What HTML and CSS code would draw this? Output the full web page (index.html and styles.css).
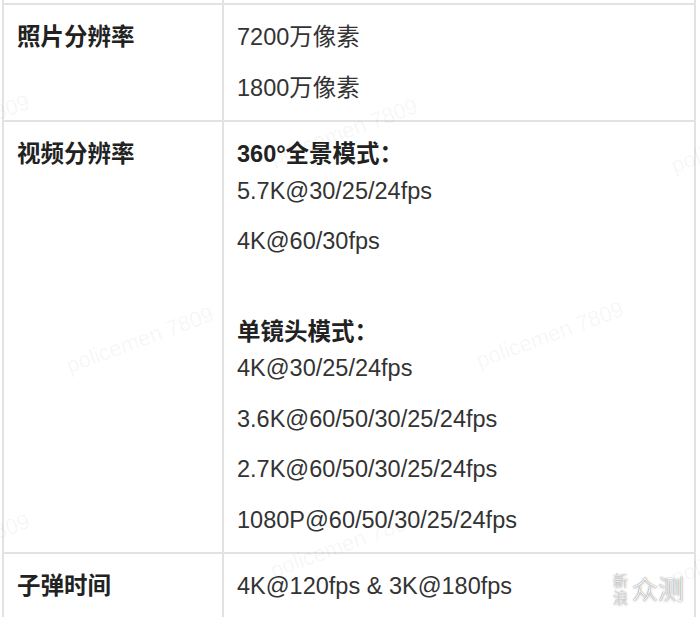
FILE: index.html
```html
<!DOCTYPE html>
<html lang="zh-CN">
<head>
    <meta charset="UTF-8">
    <meta name="viewport" content="width=device-width, initial-scale=1.0">
    <title>参数表</title>
    <link rel="stylesheet" href="styles.css">
</head>
<body>

    <div class="page">
        <table class="spec">
            <tr class="tail">
                <th></th>
                <td></td>
            </tr>
            <tr>
                <th>照片分辨率</th>
                <td>
                    <p>7200万像素</p>
                    <p>1800万像素</p>
                </td>
            </tr>
            <tr>
                <th>视频分辨率</th>
                <td>
                    <p><strong>360°全景模式：</strong><br>5.7K@30/25/24fps</p>
                    <p>4K@60/30fps</p>
                    <p class="group"><strong>单镜头模式：</strong><br>4K@30/25/24fps</p>
                    <p>3.6K@60/50/30/25/24fps</p>
                    <p>2.7K@60/50/30/25/24fps</p>
                    <p>1080P@60/50/30/25/24fps</p>
                </td>
            </tr>
            <tr>
                <th>子弹时间</th>
                <td>
                    <p>4K@120fps &amp; 3K@180fps</p>
                </td>
            </tr>
        </table>

        <div class="watermarks">
            <span class="wm wm-a1">policemen 7809</span>
            <span class="wm wm-a2">policemen 7809</span>
            <span class="wm wm-a3">policemen 7809</span>
            <span class="wm wm-b1">policemen 7809</span>
            <span class="wm wm-b2">policemen 7809</span>
            <span class="wm wm-c1">policemen 7809</span>
            <span class="wm wm-c2">policemen 7809</span>
            <span class="wm wm-c3">policemen 7809</span>
        </div>

        <div class="brand">
            <div class="brand-small"><span>新</span><span>浪</span></div>
            <div class="brand-big">众测</div>
        </div>
    </div>

</body>
</html>
```

FILE: styles.css
```css
* {
    box-sizing: border-box;
    margin: 0;
    padding: 0;
}

body {
    background-color: #fff;
    font-family: "Liberation Sans", Arial, "Noto Sans CJK SC", sans-serif;
    color: #333;
}

.page {
    position: relative;
    height: 617px;
    padding-left: 2px;
    overflow: hidden;
}

.spec {
    border-collapse: separate;
    border-spacing: 0;
    table-layout: fixed;
    width: 694px;
    border-left: 2px solid #e2e2e4;
}

.spec th,
.spec td {
    vertical-align: top;
    text-align: left;
    padding: 14px 13px;
    font-size: 23.5px;
    line-height: 36.5px;
    border-right: 2px solid #e2e2e4;
    border-bottom: 2px solid #e2e2e4;
}

.spec th {
    width: 220px;
    font-weight: bold;
    color: #222;
}

.spec td {
    width: 472px;
}

.spec .tail th,
.spec .tail td {
    height: 5px;
    padding: 0;
}

.spec strong {
    color: #222;
}

.spec p + p {
    margin-top: 14px;
}

.spec p.group {
    margin-top: 54px;
}

/* faint repeated watermark */
.watermarks {
    position: absolute;
    inset: 0;
    pointer-events: none;
}

.wm {
    position: absolute;
    font-family: "Liberation Sans", Arial, sans-serif;
    font-size: 22px;
    white-space: nowrap;
    color: rgba(0, 0, 0, 0.05);
    transform: translate(-50%, -50%) rotate(-20deg);
}

.wm-a1 { left: -44px; top: 128px; }
.wm-a2 { left: 344px; top: 132px; }
.wm-a3 { left: 745px; top: 140px; }
.wm-b1 { left: 140px; top: 340px; }
.wm-b2 { left: 550px; top: 335px; }
.wm-c1 { left: -44px; top: 547px; }
.wm-c2 { left: 344px; top: 545px; }
.wm-c3 { left: 745px; top: 552px; }

.brand {
    position: absolute;
    left: 613px;
    top: 571px;
    display: flex;
    align-items: center;
    gap: 4px;
    font-family: "Noto Sans CJK SC", sans-serif;
    font-weight: 300;
    color: #f7f7f7;
    text-shadow: 0 0 1px rgba(0, 0, 0, 0.6), 0 1px 3px rgba(0, 0, 0, 0.25);
}

.brand-small {
    display: flex;
    flex-direction: column;
    font-size: 15px;
    line-height: 17px;
}

.brand-big {
    font-size: 26px;
    line-height: 30px;
}
```
